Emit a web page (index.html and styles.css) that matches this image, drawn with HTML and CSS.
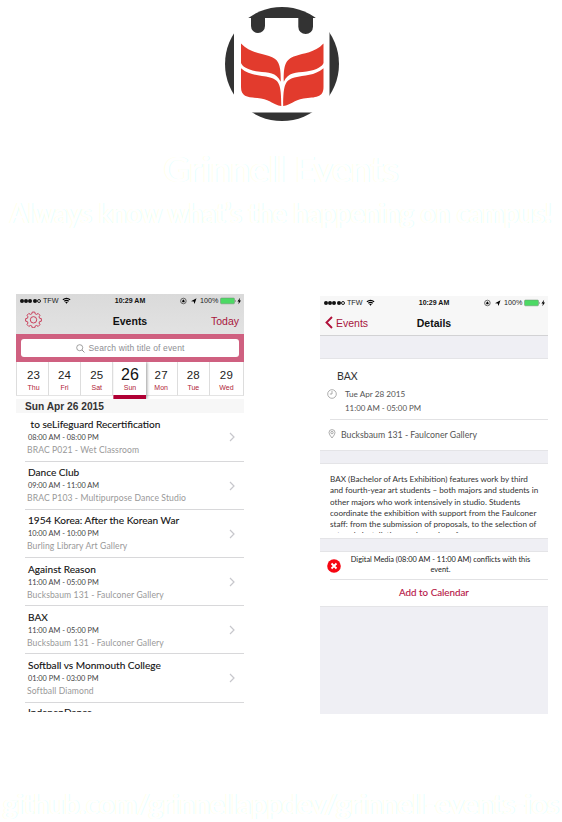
FILE: index.html
```html
<!DOCTYPE html>
<html lang="en">
<head>
<meta charset="utf-8">
<title>Grinnell Events</title>
<link rel="stylesheet" href="styles.css">
</head>
<body>
<svg width="0" height="0" class="defs">
  <symbol id="wifi" viewBox="0 0 9 7"><path d="M.5 2.3Q4.5-1 8.5 2.3L7.7 3.2Q4.5.6 1.3 3.2ZM1.9 3.8Q4.5 1.7 7.1 3.8L6.3 4.7Q4.5 3.4 2.7 4.7ZM3.2 5.2Q4.5 4.3 5.8 5.2L4.5 6.7Z"/></symbol>
  <symbol id="tray" viewBox="0 0 62 8">
    <circle cx="3.4" cy="4" r="2.8" fill="none" stroke="#333" stroke-width=".7"/><path d="M2.200 3.700h2.400v1.600H2.200zM2.600 3.700V3q.8-.8 1.600 0v.7"/>
    <path d="M11 4.200 16.500 1.200 14.500 7 13.700 4.400Z"/>
    <rect x="40.500" y="1" width="14" height="5.800" rx="1" fill="#4cd964" stroke="#6c8b70" stroke-width=".5"/><path d="M55.500 3v2q1-.9 0-2ZM60.100.8 57.400 4.400h1.500L58.400 7.200 61 3.500H59.500Z"/>
  </symbol>
  <symbol id="chevron" viewBox="0 0 6 10"><path d="m1 1 4 4-4 4" fill="none" stroke="#c7c7cc" stroke-width="1.2"/></symbol>
</svg>
<header class="hero">
  <svg class="logo" viewBox="0 0 114 114">
    <circle cx="57" cy="57" r="57" fill="#333"/>
    <path fill="#fff" d="M9 11H104.500V105.500H9Z"/>
    <path fill="#333" d="M26 10.500H40V19a7 7 0 0 1-14 0ZM73.300 10.500H88V19.700a7.300 7.300 0 0 1-14.700 0Z"/>
    <g id="leaves" fill="#e23b2d"><path d="M16 36.500C25 46 36 46 44 49C54 52 56 58 55.700 74.700C51 65 44 66 33 64.500C22 63 17 59 16 56Z"/><path d="M16 61.300C25 69 35 68 45 70.500C54 73 56.300 77 56.300 99C48 98 46 93 36 91.500C24 90 16 91 16 80Z"/></g>
    <use href="#leaves" transform="translate(114.500) scale(-1 1)"/>
  </svg>
  <h1 class="ghost title">Grinnell Events</h1>
  <p class="ghost tagline">Always know what’s the happening on campus!</p>
</header>

<main class="phones">
  <section class="phone list">
    <div class="top">
      <div class="status"><span class="carrier"><i></i><i></i><i></i><i></i><i class="off"></i><b>TFW</b><svg width="9" height="7"><use href="#wifi"/></svg></span><strong>10:29 AM</strong><span class="tray"><svg width="62" height="8"><use href="#tray"/></svg><em>100%</em></span></div>
      <div class="nav">
        <svg class="gear" viewBox="0 0 16 16"><g fill="none" stroke="#c8304f" stroke-width=".85"><path d="M6.800 1h2.400l.4 1.700 1.300.5 1.500-.9 1.700 1.700-.9 1.500.5 1.300 1.700.4v2.400l-1.700.4-.5 1.300.9 1.500-1.700 1.700-1.500-.9-1.300.5-.4 1.700H6.800l-.4-1.700-1.300-.5-1.500.9-1.700-1.700.9-1.500-.5-1.300L.6 9.600V7.200l1.700-.4.5-1.300-.9-1.500 1.700-1.700 1.500.9 1.300-.5Z"/><circle cx="8" cy="8.300" r="3"/></g></svg>
        <strong>Events</strong><span>Today</span>
      </div>
    </div>
    <div class="search"><div class="field"><svg width="9" height="9" viewBox="0 0 8 8"><circle cx="3.300" cy="3.300" r="2.700" fill="none" stroke="#888" stroke-width=".7"/><path d="m5.300 5.300 2.200 2.200" stroke="#888" stroke-width=".8"/></svg><span>Search with title of event</span></div></div>
    <div class="week">
      <div class="day"><b>23</b><span>Thu</span></div><div class="day"><b>24</b><span>Fri</span></div><div class="day"><b>25</b><span>Sat</span></div><div class="day on"><b>26</b><span>Sun</span></div><div class="day"><b>27</b><span>Mon</span></div><div class="day"><b>28</b><span>Tue</span></div><div class="day"><b>29</b><span>Wed</span></div>
    </div>
    <h2 class="date">Sun Apr 26 2015</h2>
    <div class="rows">
      <article class="row"><h3>&nbsp;to seLifeguard Recertification</h3><time>08:00 AM - 08:00 PM</time><p>BRAC P021 - Wet Classroom</p><svg><use href="#chevron"/></svg></article>
      <article class="row"><h3>Dance Club</h3><time>09:00 AM - 11:00 AM</time><p>BRAC P103 - Multipurpose Dance Studio</p><svg><use href="#chevron"/></svg></article>
      <article class="row"><h3>1954 Korea: After the Korean War</h3><time>10:00 AM - 10:00 PM</time><p>Burling Library Art Gallery</p><svg><use href="#chevron"/></svg></article>
      <article class="row"><h3>Against Reason</h3><time>11:00 AM - 05:00 PM</time><p>Bucksbaum 131 - Faulconer Gallery</p><svg><use href="#chevron"/></svg></article>
      <article class="row"><h3>BAX</h3><time>11:00 AM - 05:00 PM</time><p>Bucksbaum 131 - Faulconer Gallery</p><svg><use href="#chevron"/></svg></article>
      <article class="row"><h3>Softball vs Monmouth College</h3><time>01:00 PM - 03:00 PM</time><p>Softball Diamond</p><svg><use href="#chevron"/></svg></article>
      <article class="row last"><h3>IndepenDance</h3></article>
    </div>
  </section>

  <section class="phone detail">
    <div class="top">
      <div class="status"><span class="carrier"><i></i><i></i><i></i><i></i><i class="off"></i><b>TFW</b><svg width="9" height="7"><use href="#wifi"/></svg></span><strong>10:29 AM</strong><span class="tray"><svg width="62" height="8"><use href="#tray"/></svg><em>100%</em></span></div>
      <div class="nav"><span class="back"><svg width="8" height="13" viewBox="0 0 8 13"><path d="M7 1 1.500 6.500 7 12" fill="none" stroke="#b0103a" stroke-width="1.900"/></svg>Events</span><strong>Details</strong></div>
    </div>
    <div class="band first"></div>
    <div class="info">
      <h3>BAX</h3>
      <div class="when"><svg width="10" height="10" viewBox="0 0 10 10"><g fill="none" stroke="#8b8b8b" stroke-width=".7"><circle cx="5" cy="5" r="4.300"/><path d="M5 2v3H2.800"/></g></svg><div>Tue Apr 28 2015<br><span>11:00 AM - 05:00 PM</span></div></div>
      <div class="where"><svg width="8" height="10" viewBox="0 0 8 10"><g fill="none" stroke="#8b8b8b" stroke-width=".7"><path d="M4 9Q1 5.500 1 3.600a3 3 0 0 1 6 0Q7 5.500 4 9Z"/><circle cx="4" cy="3.600" r="1.200"/></g></svg><span>Bucksbaum 131 - Faulconer Gallery</span></div>
    </div>
    <div class="band"></div>
    <div class="about"><p><span>BAX (Bachelor of Arts Exhibition) features work by third</span><span>and fourth-year art students – both majors and students in</span><span>other majors who work intensively in studio. Students</span><span>coordinate the exhibition with support from the Faulconer</span><span>staff: from the submission of proposals, to the selection of</span><span>artwork, installation, and opening of</span></p></div>
    <div class="band"></div>
    <div class="conflict"><svg width="14" height="14" viewBox="0 0 14 14"><circle cx="7" cy="7" r="6.800" fill="#f60612"/><path d="m4.500 4.500 5 5m0-5-5 5" stroke="#fff" stroke-width="1.800"/></svg><p>Digital Media (08:00 AM - 11:00 AM) conflicts with this<br>event.</p></div>
    <div class="add">Add to Calendar</div>
  </section>
</main>
<footer class="ghost repo">github.com/grinnellappdev/grinnell-events-ios</footer>
</body>
</html>
```
FILE: styles.css
```css
* { box-sizing: border-box; }
body { margin: 0; width: 562px; height: 822px; overflow: hidden; background: #fff; font-family: Lato, sans-serif; color: #222; }
h1, h2, h3, p { margin: 0; font-weight: 400; }
.defs { display: block; height: 0; }
.hero { height: 294px; padding-top: 7px; text-align: center; }
.logo { display: block; width: 114px; height: 114px; margin: 0 auto 0 225px; }
.ghost { color: #fff; white-space: nowrap; text-shadow: -1px 0 #ffffec, 1px 0 #e8ffff; }
.title { margin-top: 26px; font-size: 35.500px; line-height: 44px; }
.tagline { margin-top: 4px; font-size: 26.300px; line-height: 36px; }
.repo { margin-top: 72px; font-size: 27.500px; line-height: 36px; text-align: center; }

.phones { display: flex; padding-left: 16px; gap: 76px; align-items: flex-start; height: 420px; }
.phone { width: 228px; height: 418px; overflow: hidden; flex: none; }
.detail { margin-top: 2px; background: #efeff4; }
.top { height: 40px; background: linear-gradient(#dadada, #e2e2e2); font-family: "Liberation Sans", sans-serif; }
.detail .top { background: #f7f7f7; border-bottom: 1px solid #d2d2d4; }
.status { height: 13px; display: grid; grid-template-columns: 1fr 40px 1fr; align-items: center; font-size: 7.200px; color: #222; }
.status strong { text-align: center; white-space: nowrap; font-size: 7px; color: #111; }
.carrier { display: flex; align-items: center; padding-left: 4px; }
.carrier i { width: 4px; height: 4px; border-radius: 50%; background: #111; margin-right: .2px; }
.carrier .off { background: none; border: .6px solid #222; }
.carrier b { font-weight: 400; margin: 0 3px 0 2px; }
.tray { display: grid; justify-content: end; align-items: center; padding-right: 2px; }
.tray svg, .tray em { grid-area: 1 / 1; }
.tray em { font-style: normal; padding-left: 20px; }
.nav { position: relative; height: 27px; display: flex; align-items: center; justify-content: space-between; padding: 0 5px 0 9px; font-size: 10.500px; color: #a8153b; }
.nav strong { position: absolute; left: 0; right: 0; text-align: center; color: #111; }
.gear { width: 17px; height: 17px; margin-top: -3px; }
.back { display: flex; align-items: center; gap: 3px; margin-left: -4px; }

.search { height: 28px; background: #cf6080; padding: 5px; }
.field { height: 18px; border-radius: 3px; background: #fff; display: flex; align-items: center; justify-content: center; gap: 4px; font: 8.500px "Liberation Sans", sans-serif; letter-spacing: .13px; color: #8e8e93; }
.week { height: 37px; display: grid; grid-template-columns: 33px repeat(5, 32.200px) 1fr; }
.day { height: 34px; border-right: 1px solid #ddd; border-bottom: 1px solid #e4e4e4; display: flex; flex-direction: column; align-items: center; padding-top: 6px; font: 7px "Liberation Sans", sans-serif; color: #b02438; }
.day:first-child { border-left: 1px solid #ddd; padding-left: 2px; }
.day b { font-weight: 400; font-size: 11.500px; letter-spacing: .2px; line-height: 14px; color: #222; }
.day span { line-height: 10px; margin-top: 1px; }
.day.on { position: relative; height: 37px; padding: 5px 0 0 1px; background: #fff; border-right: 0; border-bottom: 4px solid #b00034; box-shadow: 1px 0 3px #999; clip-path: inset(0 -5px 0 0); }
.day.on b { font-size: 16px; line-height: 16px; letter-spacing: 0; color: #111; }
.day.on span { margin-top: 0; }
.date { height: 14.400px; padding-left: 9px; background: #f7f7f7; font: bold 10.200px/15px "Liberation Sans", sans-serif; color: #333; }
.row { position: relative; height: 48.200px; margin-left: 9px; padding: 3.600px 0 0 3px; border-bottom: 1px solid #d8d8da; white-space: nowrap; }
.row h3 { font-size: 10.100px; line-height: 14px; color: #111; -webkit-text-stroke: .1px #111; }
.row time { display: block; font-size: 7.350px; line-height: 13px; color: #444; }
.row p { margin-left: -1px; font-size: 8.600px; letter-spacing: .1px; line-height: 13px; color: #999; }
.row svg { position: absolute; right: 9px; top: 19px; width: 6px; height: 10px; }
.row.last { padding-top: 2.500px; }

.band { height: 14px; background: #efeff4; border-top: 1px solid #e4e4e7; border-bottom: 1px solid #e4e4e7; }
.band.first { height: 23px; border-top: 0; }
.info { height: 91px; background: #fff; padding: 9px 0 0 7px; color: #555; }
.info h3 { margin-left: 10px; font-size: 10.500px; line-height: 16px; color: #333; }
.when { display: flex; gap: 8px; margin-top: 3px; font-size: 8.200px; line-height: 14px; height: 32px; }
.when span { font-size: 7.900px; }
.when svg { margin-top: 2px; }
.where { display: flex; align-items: center; gap: 5px; margin-left: 3px; height: 30px; border-top: 1px solid #e2e2e4; font-size: 8.750px; }
.where svg { margin: -2px 0 0 -2px; }
.about { height: 74px; background: #fff; padding: 10px 0 0 10px; }
.about p { height: 59px; overflow: hidden; color: #333; font-size: 8.130px; line-height: 11.250px; }
.about span { display: block; white-space: nowrap; }
.conflict { height: 27px; background: #fff; display: flex; align-items: center; padding: 0 8px 0 7px; }
.conflict p { flex: 1; text-align: center; font-size: 7.400px; line-height: 10px; margin-top: -2px; white-space: nowrap; }
.add { height: 28px; background: linear-gradient(#e2e2e4, #e2e2e4) 10px 0 / 218px 1px no-repeat #fff; border-bottom: 1px solid #e4e4e7; text-align: center; font-size: 9.800px; line-height: 27px; color: #b51243; -webkit-text-stroke: .1px #b51243; }
```
